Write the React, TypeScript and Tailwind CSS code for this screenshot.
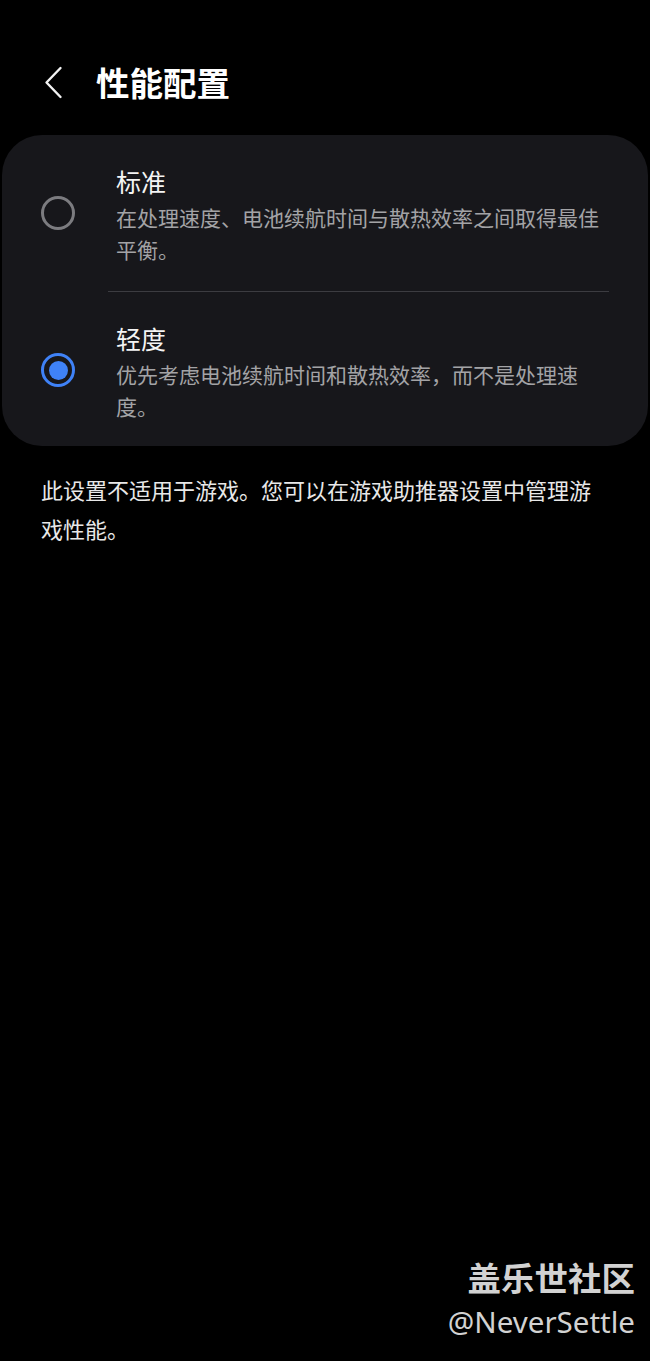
const CJK = '"Noto Sans CJK SC", "Noto Sans", sans-serif';

interface OptionProps {
  title: string;
  description: string;
  selected: boolean;
  last?: boolean;
}

function Radio({ selected }: { selected: boolean }) {
  if (selected) {
    return (
      <div className="flex h-[34px] w-[34px] shrink-0 items-center justify-center rounded-full border-[3px] border-[#3f82f7]">
        <div className="h-[19px] w-[19px] rounded-full bg-[#3f82f7]" />
      </div>
    );
  }
  return <div className="h-[34px] w-[34px] shrink-0 rounded-full border-[3px] border-[#7c7c80]" />;
}

function Option({ title, description, selected, last }: OptionProps) {
  return (
    <div className={`flex items-center pl-[39px] pr-[39px] pt-[26px] ${last ? 'pb-[24px]' : 'pb-[26px]'}`}>
      <Radio selected={selected} />
      <div className="ml-[41px] min-w-0 flex-1">
        <div className="text-[25px] leading-[40px] text-[#f4f4f4]">{title}</div>
        <div className="text-[21px] leading-[32px] text-[#a3a3a6]">{description}</div>
      </div>
    </div>
  );
}

export default function App() {
  return (
    <div className="flex h-[1361px] w-[650px] flex-col bg-black" style={{ fontFamily: CJK }}>
      <div className="h-[135px] pt-[49px]">
        <div className="flex h-[66px] items-center">
          <svg className="ml-[44px]" width="19" height="33" viewBox="0 0 19 33" fill="none">
            <path d="M16.5 2 L2.5 16.5 L16.5 31" stroke="#f2f2f2" strokeWidth="2.4" strokeLinecap="round" strokeLinejoin="round" />
          </svg>
          <h1 className="ml-[33px] text-[33.5px] font-bold leading-none text-white">性能配置</h1>
        </div>
      </div>

      <div className="mx-[2px] rounded-[40px] bg-[#17171b]">
        <Option
          title="标准"
          description="在处理速度、电池续航时间与散热效率之间取得最佳平衡。"
          selected={false}
        />
        <div className="ml-[106px] mr-[39px] h-px bg-[#3c3c41]" />
        <Option
          title="轻度"
          description="优先考虑电池续航时间和散热效率，而不是处理速度。"
          selected={true}
          last
        />
      </div>

      <p className="mt-[24px] px-[41px] text-[22px] leading-[39px] text-[#e8e8e8]">
        此设置不适用于游戏。您可以在游戏助推器设置中管理游戏性能。
      </p>

      <div className="mt-auto flex flex-col items-end pr-[15px] pb-[18px]">
        <div className="text-[33.5px] font-bold leading-[40px] text-[#d2d2d2]">盖乐世社区</div>
        <div
          className="mt-[4px] text-[29.5px] leading-[42px] text-[#d2d2d2]"
          style={{ fontFamily: '"Noto Sans", sans-serif' }}
        >
          @NeverSettle
        </div>
      </div>
    </div>
  );
}
